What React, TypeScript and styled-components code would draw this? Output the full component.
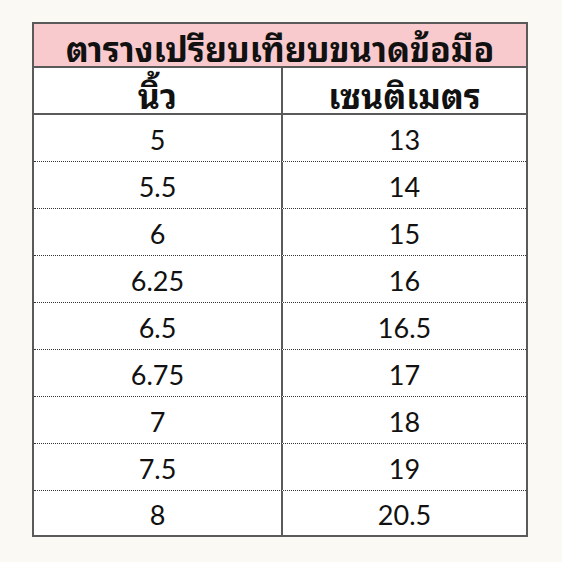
import * as React from "react";
import styled, { createGlobalStyle } from "styled-components";

const GlobalStyle = createGlobalStyle`
  html, body {
    margin: 0;
    padding: 0;
    background: #faf9f4;
  }
`;

const thai = `"Noto Sans Thai Looped", "Noto Sans Thai", "Noto Sans", sans-serif`;

const Page = styled.div`
  width: 562px;
  height: 562px;
  padding: 22px 0 0 32px;
  box-sizing: border-box;
`;

const Table = styled.div`
  width: 496px;
  border: 2px solid #5a5a5a;
  box-sizing: border-box;
  background: #ffffff;
  font-family: ${thai};
  color: #111;
`;

const Title = styled.div`
  height: 44px;
  background: #f8cacd;
  border-bottom: 2px solid #5a5a5a;
  display: flex;
  align-items: center;
  justify-content: center;
  font-size: 34px;
  font-weight: 700;
  line-height: 1;
  padding-top: 3px;
  box-sizing: border-box;
`;

const Row = styled.div<{ $head?: boolean; $last?: boolean }>`
  display: grid;
  grid-template-columns: 247px 1fr;
  height: ${(p) => (p.$last ? "44px" : "47px")};
  box-sizing: border-box;
  border-bottom: ${(p) =>
    p.$last ? "none" : p.$head ? "2px solid #5a5a5a" : "1px dotted #333"};
`;

const Cell = styled.div<{ $head?: boolean }>`
  display: flex;
  align-items: center;
  justify-content: center;
  font-family: ${(p) => (p.$head ? thai : `"Lato", "Noto Sans", sans-serif`)};
  font-size: ${(p) => (p.$head ? "34px" : "27px")};
  font-weight: ${(p) => (p.$head ? 700 : 400)};
  line-height: 1;
  padding-top: ${(p) => (p.$head ? "6px" : "3px")};
  & + & {
    border-left: 2px solid #5a5a5a;
  }
`;

const rows: [string, string][] = [
  ["5", "13"],
  ["5.5", "14"],
  ["6", "15"],
  ["6.25", "16"],
  ["6.5", "16.5"],
  ["6.75", "17"],
  ["7", "18"],
  ["7.5", "19"],
  ["8", "20.5"],
];

const App = () => (
  <Page>
    <GlobalStyle />
    <Table>
      <Title>ตารางเปรียบเทียบขนาดข้อมือ</Title>
      <Row $head>
        <Cell $head>นิ้ว</Cell>
        <Cell $head>เซนติเมตร</Cell>
      </Row>
      {rows.map(([inch, cm], i) => (
        <Row key={inch} $last={i === rows.length - 1}>
          <Cell>{inch}</Cell>
          <Cell>{cm}</Cell>
        </Row>
      ))}
    </Table>
  </Page>
);

export default App;
